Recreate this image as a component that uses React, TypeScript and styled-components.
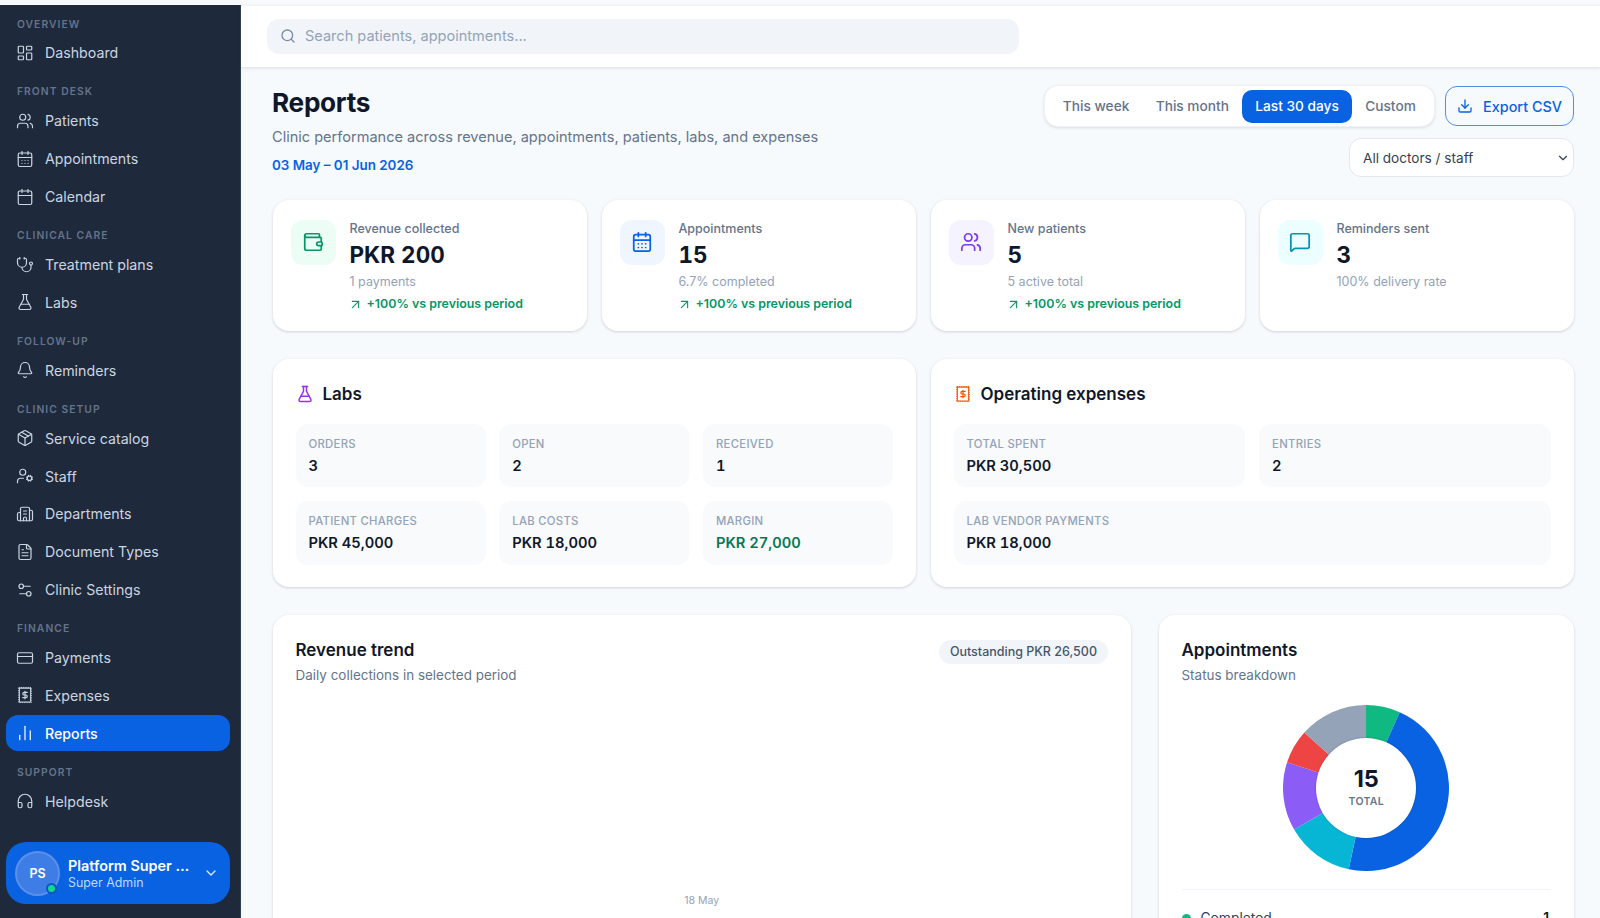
import React from "react";
import styled, { createGlobalStyle } from "styled-components";
import {
  LayoutDashboard, Users, CalendarDays, Calendar, Stethoscope, FlaskConical, Bell, Package,
  UserCog, Building2, FileText, Settings2, CreditCard, ChartNoAxesColumn, Headphones,
  ChevronDown, Search, Download, Wallet, MessageSquare, ArrowUpRight,
} from "lucide-react";

const Global = createGlobalStyle`
  html, body { margin: 0; padding: 0; height: 100%; overflow: hidden; background: #fff; }
  * { box-sizing: border-box; }
  body { font-family: Inter, "Liberation Sans", sans-serif; color: #0f172a; }
`;

const Shell = styled.div`
  display: flex;
  height: 918px;
  padding-top: 5px;
  background: #f8f9fb;
  overflow: hidden;
`;
const Sidebar = styled.aside`
  width: 241px;
  flex: none;
  background: #1e293b;
  border-right: 1px solid #334155;
  padding: 12.5px 10px 14px 6px;
  display: flex;
  flex-direction: column;
`;
const Nav = styled.nav`
  display: flex;
  flex-direction: column;
  gap: 14.4px;
`;
const Section = styled.section`
  display: flex;
  flex-direction: column;
  gap: 1.9px;
`;
const SectionLabel = styled.div`
  height: 12px;
  line-height: 12px;
  margin: 0 0 3.6px 11px;
  font-size: 10.3px;
  font-weight: 600;
  letter-spacing: 1.05px;
  color: #64748b;
  text-transform: uppercase;
`;
const NavItem = styled.a<{ $active?: boolean }>`
  display: flex;
  align-items: center;
  gap: 11px;
  height: 36px;
  padding: 0 10px;
  border-radius: 12px;
  font-size: 14.2px;
  font-weight: ${(p) => (p.$active ? 500 : 400)};
  color: ${(p) => (p.$active ? "#fff" : "#cbd5e1")};
  background: ${(p) => (p.$active ? "#0862e2" : "transparent")};
  svg { flex: none; }
`;
const Profile = styled.div`
  margin-top: auto;
  height: 62px;
  border-radius: 20px;
  background: #0862e2;
  display: flex;
  align-items: center;
  padding: 0 11px 0 9px;
  gap: 8px;
`;
const Avatar = styled.div`
  position: relative;
  width: 45px;
  height: 45px;
  flex: none;
  border-radius: 50%;
  background: #3f7de6;
  border: 2px solid #5a8fea;
  color: #fff;
  font-size: 12.5px;
  font-weight: 600;
  display: flex;
  align-items: center;
  justify-content: center;
`;
const StatusDot = styled.span`
  position: absolute;
  right: 1px;
  bottom: 0;
  width: 11px;
  height: 11px;
  border-radius: 50%;
  background: #10d98c;
  border: 2px solid #0b56c4;
`;
const ProfileText = styled.div`
  flex: none;
  width: 122px;
  padding-top: 1px;
`;
const ProfileName = styled.div`
  font-size: 14.4px;
  font-weight: 600;
  line-height: 18px;
  color: #fff;
  white-space: nowrap;
  overflow: hidden;
  text-overflow: ellipsis;
`;
const ProfileRole = styled.div`
  font-size: 12.4px;
  line-height: 16px;
  color: #bfdbfe;
`;
const ProfileChevron = styled(ChevronDown)`
  margin-left: auto;
  color: #dbeafe;
`;

const Main = styled.div`
  flex: 1;
  min-width: 0;
  display: flex;
  flex-direction: column;
  background: #f7fafd;
`;
const TopBar = styled.header`
  height: 63px;
  flex: none;
  background: #fff;
  border-top: 1px solid #eef1f5;
  border-bottom: 1px solid #e5eaf0;
  box-shadow: 0 1px 3px rgba(15, 23, 42, 0.08);
  padding: 13px 0 0 26px;
`;
const SearchBox = styled.div`
  width: 752px;
  height: 34.6px;
  border-radius: 12px;
  background: #f1f5f9;
  display: flex;
  align-items: center;
  gap: 9px;
  padding: 0 13px;
  color: #94a3b8;
  font-size: 14.55px;
`;
const SearchIcon = styled(Search)`
  color: #7c8ba1;
`;
const Content = styled.main`
  padding: 17px 26px 0 31.5px;
  display: flex;
  flex-direction: column;
  gap: 28.3px;
`;
const PageHead = styled.div`
  display: flex;
  justify-content: space-between;
  align-items: flex-start;
  height: 88.2px;
  margin-bottom: -1px;
`;
const TitleBlock = styled.div`
  display: flex;
  flex-direction: column;
  margin-left: -0.5px;
`;
const Title = styled.h1`
  margin: 0;
  font-size: 26.2px;
  line-height: 36px;
  font-weight: 700;
  letter-spacing: -0.3px;
  color: #0f172a;
`;
const Subtitle = styled.p`
  margin: 4.5px 0 0;
  font-size: 14.55px;
  line-height: 22px;
  color: #64748b;
`;
const DateRange = styled.div`
  margin-top: 6px;
  font-size: 13.4px;
  line-height: 22px;
  font-weight: 600;
  color: #0862e2;
`;
const Controls = styled.div`
  display: flex;
  flex-direction: column;
  align-items: flex-end;
  gap: 11px;
`;
const ControlRow = styled.div`
  display: flex;
  align-items: center;
  gap: 10.5px;
`;
const Segments = styled.div`
  height: 42px;
  padding: 0 4.5px;
  display: flex;
  align-items: center;
  background: #fff;
  border: 1px solid #eef2f6;
  border-radius: 14px;
  box-shadow: 0 1px 3px rgba(15, 23, 42, 0.12);
`;
const Segment = styled.button<{ $active?: boolean }>`
  height: 33px;
  border: 0;
  border-radius: 10px;
  padding: 0 13.2px;
  font: inherit;
  font-size: 13.7px;
  font-weight: 500;
  color: ${(p) => (p.$active ? "#fff" : "#64748b")};
  background: ${(p) => (p.$active ? "#0862e2" : "transparent")};
`;
const ExportButton = styled.button`
  height: 40px;
  width: 129px;
  display: flex;
  align-items: center;
  justify-content: center;
  gap: 10px;
  border: 1.5px solid #4e8fee;
  border-radius: 12px;
  background: #f7fafd;
  color: #0862e2;
  font: inherit;
  font-size: 14.4px;
  font-weight: 500;
`;
const SelectWrap = styled.div`
  position: relative;
  width: 225px;
  height: 39px;
`;
const Select = styled.select`
  appearance: none;
  width: 100%;
  height: 100%;
  border: 1px solid #e2e8f0;
  border-radius: 12px;
  background: #fff;
  color: #334155;
  font: inherit;
  font-size: 13.6px;
  padding: 0 13px;
`;
const SelectArrow = styled(ChevronDown)`
  position: absolute;
  right: 4px;
  top: 12.5px;
  color: #334155;
  pointer-events: none;
`;

const KpiGrid = styled.div`
  display: grid;
  grid-template-columns: repeat(4, 1fr);
  gap: 14.5px;
`;
const Card = styled.div`
  background: #fff;
  border-radius: 16px;
  box-shadow: 0 1px 3px rgba(15, 23, 42, 0.18);
`;
const KpiCard = styled(Card)`
  height: 130.5px;
  padding: 19.5px 18px;
  display: flex;
  gap: 14px;
`;
const IconTile = styled.div<{ $bg: string; $fg: string }>`
  width: 45px;
  height: 45px;
  flex: none;
  border-radius: 12px;
  display: flex;
  align-items: center;
  justify-content: center;
  background: ${(p) => p.$bg};
  color: ${(p) => p.$fg};
`;
const KpiBody = styled.div`
  display: flex;
  flex-direction: column;
  min-width: 0;
`;
const KpiLabel = styled.div`
  font-size: 12.5px;
  font-weight: 500;
  line-height: 18px;
  color: #64748b;
`;
const KpiValue = styled.div`
  font-size: 22.5px;
  font-weight: 700;
  font-variant-numeric: tabular-nums;
  line-height: 32px;
  margin-top: 1px;
  color: #0f172a;
`;
const KpiSub = styled.div`
  font-size: 12.5px;
  line-height: 18px;
  margin-top: 2.5px;
  color: #94a3b8;
`;
const Trend = styled.div`
  display: flex;
  align-items: center;
  gap: 4px;
  margin: 4px 0 0 -2px;
  font-size: 12.4px;
  font-weight: 600;
  line-height: 18px;
  color: #059669;
`;

const TwoCols = styled.div`
  display: grid;
  grid-template-columns: 1fr 1fr;
  gap: 14.5px;
`;
const StatCard = styled(Card)`
  height: 227.5px;
  padding: 22.5px 23px;
`;
const StatHead = styled.div`
  display: flex;
  align-items: center;
  gap: 9px;
  height: 24px;
  margin-bottom: 18px;
  font-size: 17px;
  font-weight: 600;
  color: #0f172a;
`;
const StatGrid = styled.div<{ $cols: number }>`
  display: grid;
  grid-template-columns: repeat(${(p) => p.$cols}, 1fr);
  gap: 14px 13.7px;
`;
const Tile = styled.div<{ $span?: number }>`
  grid-column: span ${(p) => p.$span ?? 1};
  height: 63.4px;
  border-radius: 12px;
  background: #f8fafc;
  padding: 12px 13px;
`;
const TileLabel = styled.div`
  font-size: 11.3px;
  font-weight: 500;
  line-height: 16px;
  letter-spacing: 0.3px;
  color: #94a3b8;
  text-transform: uppercase;
`;
const TileValue = styled.div<{ $good?: boolean }>`
  font-size: 14.7px;
  font-weight: 600;
  font-variant-numeric: tabular-nums;
  line-height: 22px;
  margin-top: 3px;
  color: ${(p) => (p.$good ? "#047857" : "#0f172a")};
`;

const ChartRow = styled.div`
  display: grid;
  grid-template-columns: 858.5px 1fr;
  gap: 27.5px;
`;
const ChartCard = styled(Card)`
  height: 340px;
  padding: 23px;
  position: relative;
`;
const ChartHead = styled.div`
  display: flex;
  justify-content: space-between;
  align-items: flex-start;
`;
const ChartTitle = styled.div`
  font-size: 17px;
  font-weight: 600;
  line-height: 24px;
  color: #0f172a;
`;
const ChartSub = styled.div`
  font-size: 13.45px;
  line-height: 20px;
  margin-top: 2.5px;
  color: #64748b;
`;
const Pill = styled.div`
  height: 24px;
  line-height: 24px;
  padding: 0 11px;
  margin-top: 2px;
  border-radius: 12px;
  background: #f1f5f9;
  font-size: 12.5px;
  font-weight: 500;
  color: #475569;
`;
const PlotArea = styled.div`
  height: 223.5px;
  display: flex;
  align-items: flex-end;
  justify-content: center;
`;
const AxisTick = styled.div`
  font-size: 10.5px;
  line-height: 14px;
  color: #94a3b8;
`;
const DonutWrap = styled.div`
  position: relative;
  width: 166px;
  height: 166px;
  margin: 20.5px auto 0;
`;
const DonutCenter = styled.div`
  position: absolute;
  inset: 33px;
  padding-bottom: 2px;
  border-radius: 50%;
  background: #fff;
  box-shadow: 0 0 2px rgba(15, 23, 42, 0.3);
  display: flex;
  flex-direction: column;
  align-items: center;
  justify-content: center;
`;
const DonutNumber = styled.div`
  font-size: 23.5px;
  font-weight: 700;
  line-height: 28px;
  color: #0f172a;
`;
const DonutCaption = styled.div`
  font-size: 10.5px;
  font-weight: 600;
  line-height: 14px;
  margin-top: 2px;
  letter-spacing: 0.3px;
  color: #64748b;
`;
const Divider = styled.div`
  height: 1px;
  background: #f1f5f9;
  margin-top: 18px;
`;
const LegendRow = styled.div`
  display: flex;
  align-items: center;
  gap: 10px;
  margin-top: 19px;
  font-size: 13.8px;
  line-height: 18px;
  color: #334155;
`;
const LegendDot = styled.span<{ $c: string }>`
  width: 9px;
  height: 9px;
  border-radius: 50%;
  background: ${(p) => p.$c};
`;
const LegendCount = styled.span`
  margin-left: auto;
  margin-right: 2px;
  font-weight: 600;
  color: #0f172a;
`;

function ExpenseStamp({ size = 18, color = "currentColor" }: { size?: number; color?: string }) {
  return (
    <svg width={size} height={size} viewBox="0 0 24 24" fill="none" stroke={color} strokeLinecap="butt" strokeLinejoin="round">
      <rect x="4.5" y="2.8" width="15" height="18.4" strokeWidth="1.4" />
      <rect x="3.6" y="1.9" width="16.8" height="20.2" strokeWidth="1.3" strokeDasharray="1.5 1.5" />
      <path d="M15 8.6h-4.2a1.7 1.7 0 0 0 0 3.4h2.4a1.7 1.7 0 0 1 0 3.4H9M12 7v10" strokeWidth="1.6" strokeLinecap="round" />
    </svg>
  );
}

const navSections = [
  { label: "Overview", items: [{ t: "Dashboard", I: LayoutDashboard }] },
  { label: "Front desk", items: [{ t: "Patients", I: Users }, { t: "Appointments", I: CalendarDays }, { t: "Calendar", I: Calendar }] },
  { label: "Clinical care", items: [{ t: "Treatment plans", I: Stethoscope }, { t: "Labs", I: FlaskConical }] },
  { label: "Follow-up", items: [{ t: "Reminders", I: Bell }] },
  { label: "Clinic setup", items: [{ t: "Service catalog", I: Package }, { t: "Staff", I: UserCog }, { t: "Departments", I: Building2 }, { t: "Document Types", I: FileText }, { t: "Clinic Settings", I: Settings2 }] },
  { label: "Finance", items: [{ t: "Payments", I: CreditCard }, { t: "Expenses", I: ExpenseStamp }, { t: "Reports", I: ChartNoAxesColumn, active: true }] },
  { label: "Support", items: [{ t: "Helpdesk", I: Headphones }] },
];

const kpis = [
  { label: "Revenue collected", value: "PKR 200", sub: "1 payments", trend: true, I: Wallet, bg: "#ecfdf5", fg: "#059669" },
  { label: "Appointments", value: "15", sub: "6.7% completed", trend: true, I: CalendarDays, bg: "#eff6ff", fg: "#0862e2" },
  { label: "New patients", value: "5", sub: "5 active total", trend: true, I: Users, bg: "#f5f3ff", fg: "#7c3aed" },
  { label: "Reminders sent", value: "3", sub: "100% delivery rate", trend: false, I: MessageSquare, bg: "#ecfeff", fg: "#0891b2" },
];

const slices = [
  { n: 1, c: "#10b981" },
  { n: 7, c: "#0862e2" },
  { n: 2, c: "#06b6d4" },
  { n: 2, c: "#8b5cf6" },
  { n: 1, c: "#ef4444" },
  { n: 2, c: "#94a3b8" },
];

function Donut() {
  let acc = 0;
  const pt = (a: number) => {
    const r = ((a - 90) * Math.PI) / 180;
    return `${83 + 83 * Math.cos(r)} ${83 + 83 * Math.sin(r)}`;
  };
  return (
    <svg width="166" height="166" viewBox="0 0 166 166">
      {slices.map((s, i) => {
        const a0 = (acc / 15) * 360;
        acc += s.n;
        const a1 = (acc / 15) * 360;
        return <path key={i} fill={s.c} d={`M83 83 L${pt(a0)} A83 83 0 ${a1 - a0 > 180 ? 1 : 0} 1 ${pt(a1)} Z`} />;
      })}
    </svg>
  );
}

export default function App() {
  return (
    <>
      <Global />
      <Shell>
        <Sidebar>
          <Nav>
            {navSections.map((s) => (
              <Section key={s.label}>
                <SectionLabel>{s.label}</SectionLabel>
                {s.items.map((it: any) => (
                  <NavItem key={it.t} $active={it.active}>
                    <it.I size={18} strokeWidth={1.6} />
                    {it.t}
                  </NavItem>
                ))}
              </Section>
            ))}
          </Nav>
          <Profile>
            <Avatar>
              PS
              <StatusDot />
            </Avatar>
            <ProfileText>
              <ProfileName>Platform Super Admin</ProfileName>
              <ProfileRole>Super Admin</ProfileRole>
            </ProfileText>
            <ProfileChevron size={16} />
          </Profile>
        </Sidebar>
        <Main>
          <TopBar>
            <SearchBox>
              <SearchIcon size={16} />
              Search patients, appointments...
            </SearchBox>
          </TopBar>
          <Content>
            <PageHead>
              <TitleBlock>
                <Title>Reports</Title>
                <Subtitle>Clinic performance across revenue, appointments, patients, labs, and expenses</Subtitle>
                <DateRange>03 May – 01 Jun 2026</DateRange>
              </TitleBlock>
              <Controls>
                <ControlRow>
                  <Segments>
                    <Segment>This week</Segment>
                    <Segment>This month</Segment>
                    <Segment $active>Last 30 days</Segment>
                    <Segment>Custom</Segment>
                  </Segments>
                  <ExportButton>
                    <Download size={16} />
                    Export CSV
                  </ExportButton>
                </ControlRow>
                <SelectWrap>
                  <Select defaultValue="all">
                    <option value="all">All doctors / staff</option>
                  </Select>
                  <SelectArrow size={14} />
                </SelectWrap>
              </Controls>
            </PageHead>
            <KpiGrid>
              {kpis.map((k) => (
                <KpiCard key={k.label}>
                  <IconTile $bg={k.bg} $fg={k.fg}>
                    <k.I size={22} strokeWidth={1.9} />
                  </IconTile>
                  <KpiBody>
                    <KpiLabel>{k.label}</KpiLabel>
                    <KpiValue>{k.value}</KpiValue>
                    <KpiSub>{k.sub}</KpiSub>
                    {k.trend && (
                      <Trend>
                        <ArrowUpRight size={15} strokeWidth={1.8} />
                        +100% vs previous period
                      </Trend>
                    )}
                  </KpiBody>
                </KpiCard>
              ))}
            </KpiGrid>
            <TwoCols>
              <StatCard>
                <StatHead>
                  <FlaskConical size={18} color="#9333ea" />
                  Labs
                </StatHead>
                <StatGrid $cols={3}>
                  <Tile><TileLabel>Orders</TileLabel><TileValue>3</TileValue></Tile>
                  <Tile><TileLabel>Open</TileLabel><TileValue>2</TileValue></Tile>
                  <Tile><TileLabel>Received</TileLabel><TileValue>1</TileValue></Tile>
                  <Tile><TileLabel>Patient charges</TileLabel><TileValue>PKR 45,000</TileValue></Tile>
                  <Tile><TileLabel>Lab costs</TileLabel><TileValue>PKR 18,000</TileValue></Tile>
                  <Tile><TileLabel>Margin</TileLabel><TileValue $good>PKR 27,000</TileValue></Tile>
                </StatGrid>
              </StatCard>
              <StatCard>
                <StatHead>
                  <ExpenseStamp size={18} color="#ea580c" />
                  Operating expenses
                </StatHead>
                <StatGrid $cols={2}>
                  <Tile><TileLabel>Total spent</TileLabel><TileValue>PKR 30,500</TileValue></Tile>
                  <Tile><TileLabel>Entries</TileLabel><TileValue>2</TileValue></Tile>
                  <Tile $span={2}><TileLabel>Lab vendor payments</TileLabel><TileValue>PKR 18,000</TileValue></Tile>
                </StatGrid>
              </StatCard>
            </TwoCols>
            <ChartRow>
              <ChartCard>
                <ChartHead>
                  <div>
                    <ChartTitle>Revenue trend</ChartTitle>
                    <ChartSub>Daily collections in selected period</ChartSub>
                  </div>
                  <Pill>Outstanding PKR 26,500</Pill>
                </ChartHead>
                <PlotArea>
                  <AxisTick>18 May</AxisTick>
                </PlotArea>
              </ChartCard>
              <ChartCard>
                <ChartTitle>Appointments</ChartTitle>
                <ChartSub>Status breakdown</ChartSub>
                <DonutWrap>
                  <Donut />
                  <DonutCenter>
                    <DonutNumber>15</DonutNumber>
                    <DonutCaption>TOTAL</DonutCaption>
                  </DonutCenter>
                </DonutWrap>
                <Divider />
                <LegendRow>
                  <LegendDot $c="#10b981" />
                  Completed
                  <LegendCount>1</LegendCount>
                </LegendRow>
              </ChartCard>
            </ChartRow>
          </Content>
        </Main>
      </Shell>
    </>
  );
}
